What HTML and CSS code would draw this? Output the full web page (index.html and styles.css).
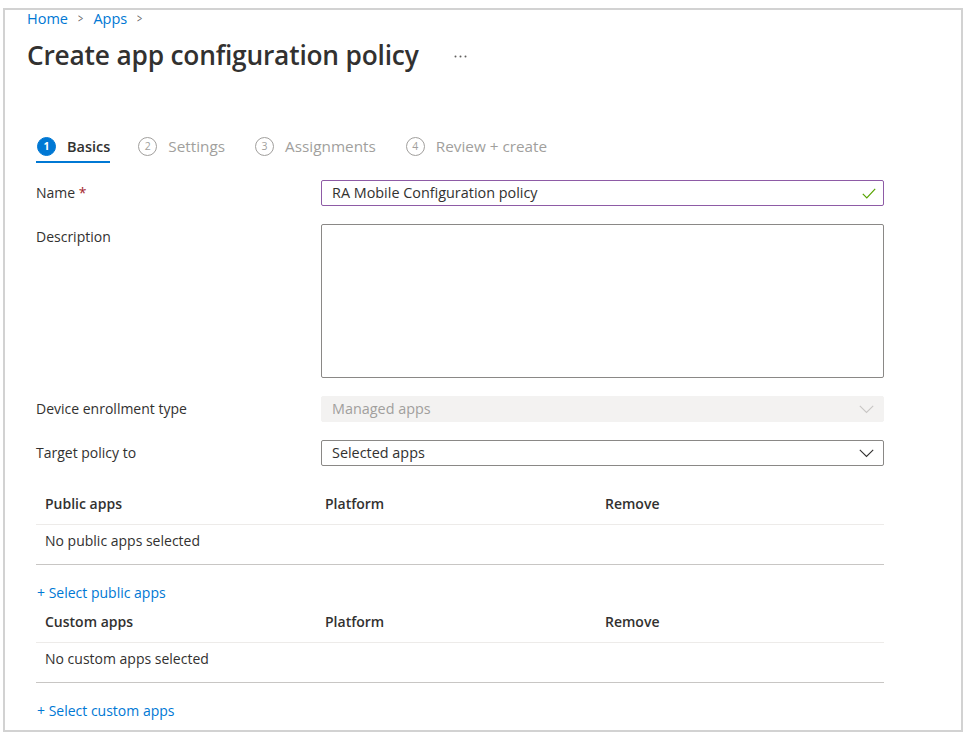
FILE: index.html
```html
<!DOCTYPE html>
<html lang="en">
<head>
<meta charset="utf-8">
<title>Create app configuration policy</title>
<link rel="stylesheet" href="styles.css">
</head>
<body>
<div class="frame">
  <header class="page-head">
    <nav class="crumbs">
      <a class="crumb">Home</a><span class="sep">&gt;</span><a class="crumb">Apps</a><span class="sep">&gt;</span>
    </nav>
    <div class="title-row">
      <h1 class="title">Create app configuration policy</h1>
      <svg class="more" width="13" height="3" viewBox="0 0 13 3"><circle cx="1.5" cy="1.5" r="1" fill="#605e5c"/><circle cx="6.5" cy="1.5" r="1" fill="#605e5c"/><circle cx="11.5" cy="1.5" r="1" fill="#605e5c"/></svg>
    </div>
  </header>

  <main class="content">
    <div class="steps">
      <div class="step active"><span class="num">1</span><span class="step-label">Basics</span></div>
      <div class="step"><span class="num">2</span><span class="step-label">Settings</span></div>
      <div class="step"><span class="num">3</span><span class="step-label">Assignments</span></div>
      <div class="step"><span class="num">4</span><span class="step-label">Review + create</span></div>
    </div>

    <div class="form">
      <label class="label">Name <span class="req">*</span></label>
      <div class="field input valid">
        <span class="value">RA Mobile Configuration policy</span>
        <svg class="check" width="14" height="11" viewBox="0 0 14 11"><path d="M0.8 5.8 L4.8 9.8 L13.2 0.8" fill="none" stroke="#57a300" stroke-width="1.2"/></svg>
      </div>

      <label class="label">Description</label>
      <div class="field textarea"></div>

      <label class="label">Device enrollment type</label>
      <div class="field input disabled">
        <span class="value">Managed apps</span>
        <svg class="chev" width="15" height="9" viewBox="0 0 15 9"><path d="M0.8 0.8 L7.5 7.5 L14.2 0.8" fill="none" stroke="#c8c6c4" stroke-width="1.1"/></svg>
      </div>

      <label class="label">Target policy to</label>
      <div class="field input select">
        <span class="value">Selected apps</span>
        <svg class="chev" width="15" height="9" viewBox="0 0 15 9"><path d="M0.8 0.8 L7.5 7.5 L14.2 0.8" fill="none" stroke="#323130" stroke-width="1.1"/></svg>
      </div>
    </div>

    <section class="apps">
      <div class="grid-row head"><span>Public apps</span><span>Platform</span><span>Remove</span></div>
      <div class="grid-row body"><span>No public apps selected</span></div>
      <a class="add-link">+ Select public apps</a>
    </section>

    <section class="apps">
      <div class="grid-row head"><span>Custom apps</span><span>Platform</span><span>Remove</span></div>
      <div class="grid-row body"><span>No custom apps selected</span></div>
      <a class="add-link">+ Select custom apps</a>
    </section>
  </main>
</div>
</body>
</html>
```

FILE: styles.css
```css
* { box-sizing: border-box; }

html, body {
  margin: 0;
  padding: 0;
  background: #ffffff;
}

body {
  font-family: "Open Sans", "Noto Sans", sans-serif;
  font-size: 14px;
  color: #323130;
  padding: 8px 5px 4px 3px;
}

.frame {
  width: 960px;
  height: 724px;
  border: 2px solid #d2d2d2;
  overflow: hidden;
}

.page-head {
  padding-left: 22px;
}

.crumbs {
  display: flex;
  align-items: center;
  height: 17px;
  line-height: 17px;
  font-size: 14.5px;
}

.crumb {
  color: #0078d4;
}

.sep {
  color: #605e5c;
  margin: 0 9px;
  font-size: 13px;
  transform: scaleX(0.7);
  display: inline-block;
}

.title-row {
  display: flex;
  align-items: center;
  margin-top: 10px;
  height: 36px;
}

.title {
  margin: 0;
  font-size: 26.3px;
  font-weight: 600;
  line-height: 36px;
  letter-spacing: -0.2px;
  color: #323130;
}

.more {
  margin-left: 35px;
  margin-top: 2px;
}

.content {
  padding-left: 31px;
  width: 884px;
}

.steps {
  display: flex;
  margin-top: 63px;
  height: 27px;
}

.step {
  display: flex;
  align-items: flex-start;
  margin-right: 29px;
  color: #a19f9d;
  height: 27px;
}

.step .num {
  width: 19px;
  height: 19px;
  border-radius: 50%;
  border: 1px solid #a19f9d;
  font-size: 10.5px;
  line-height: 17px;
  text-align: center;
  margin-top: 1px;
  margin-left: 1px;
  margin-right: 11px;
}

.step-label {
  line-height: 20px;
  font-size: 15.3px;
}

.step.active {
  border-bottom: 2px solid #0078d4;
  color: #323130;
  margin-right: 27px;
}

.step.active .num {
  background: #0078d4;
  border-color: #0078d4;
  color: #fff;
  font-weight: 700;
}

.step.active .step-label {
  font-weight: 600;
  font-size: 14.5px;
  line-height: 21px;
}

.form {
  display: grid;
  grid-template-columns: 285px 563px;
  row-gap: 18px;
  margin-top: 17px;
}

.label {
  line-height: 26px;
  font-size: 14px;
}

.req {
  color: #a4262c;
}

.field {
  border: 1px solid #8a8886;
  border-radius: 2px;
  background: #fff;
}

.input {
  height: 26px;
  display: flex;
  align-items: center;
  justify-content: space-between;
  padding: 0 9px 0 10px;
}

.input .value {
  line-height: 24px;
  font-size: 14.4px;
}

.valid {
  border-color: #8e5ba6;
}

.check {
  margin-right: -2px;
}

.textarea {
  height: 154px;
}

.disabled {
  background: #f3f2f1;
  border-color: #f3f2f1;
  color: #a19f9d;
}

.chev {
  margin-right: 0;
}

.apps {
  width: 848px;
}

.apps:first-of-type {
  margin-top: 18px;
}

.grid-row {
  display: grid;
  grid-template-columns: 280px 280px 1fr;
  padding-left: 9px;
}

.grid-row.head {
  height: 41px;
  padding-top: 10px;
  line-height: 20px;
  font-weight: 600;
  border-bottom: 1px solid #edebe9;
}

.grid-row.body {
  height: 40px;
  padding-top: 6px;
  line-height: 20px;
  border-bottom: 1px solid #c8c6c4;
}

.add-link {
  display: block;
  margin-top: 18px;
  margin-bottom: -1px;
  padding-left: 1px;
  line-height: 20px;
  color: #0078d4;
}
```
